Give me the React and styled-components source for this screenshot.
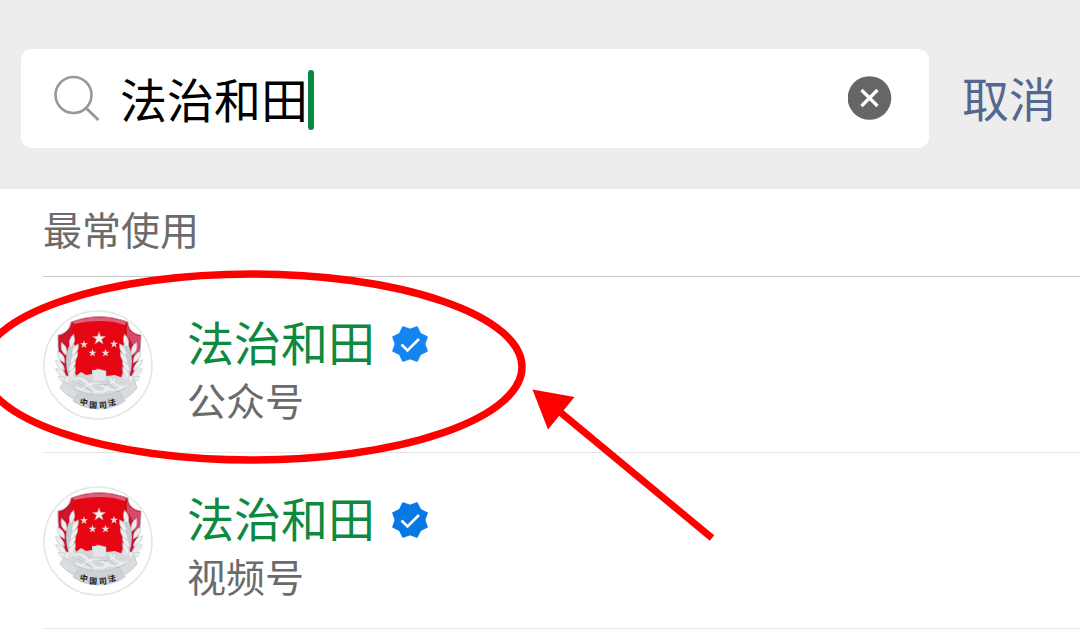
import React, { useState } from "react";
import styled, { createGlobalStyle } from "styled-components";

const GlobalStyle = createGlobalStyle`
  *, *::before, *::after { box-sizing: border-box; }
  body {
    margin: 0;
    background: #fff;
    font-family: "Noto Sans CJK SC", "Noto Sans", sans-serif;
  }
  button, input { font: inherit; margin: 0; padding: 0; border: 0; background: none; }
`;

const Page = styled.main`
  position: relative;
  overflow: hidden;
`;

const Header = styled.header`
  display: flex;
  align-items: center;
  gap: 33px;
  padding: 49px 24px 41px 21px;
  background: #ededed;
`;

const SearchBox = styled.label`
  flex: 1;
  min-width: 0;
  height: 99px;
  display: flex;
  align-items: center;
  padding: 0 37px 2px 33px;
  border-radius: 11px;
  background: #fff;
`;

const SearchIcon = styled.svg`
  width: 46px;
  height: 46px;
  margin-right: 20px;
  flex: none;
`;

const SearchInput = styled.input`
  min-width: 0;
  height: 70px;
  font-size: 47px;
  line-height: 70px;
  color: #000;
  outline: none;
  caret-color: transparent;
`;

const Caret = styled.span`
  width: 6px;
  height: 60px;
  margin-top: 4px;
  border-radius: 3px;
  background: #07893f;
  flex: none;
`;

const ClearButton = styled.button`
  width: 44px;
  height: 44px;
  margin-left: auto;
  flex: none;
  svg { display: block; }
`;

const CancelButton = styled.button`
  padding-bottom: 4px;
  font-size: 47px;
  line-height: 70px;
  color: #54678f;
  white-space: nowrap;
`;

const Results = styled.section`
  padding-left: 43px;
`;

const SectionTitle = styled.h2`
  margin: 0;
  height: 88px;
  border-bottom: 1px solid #cbcbcb;
  font-size: 39px;
  font-weight: 400;
  line-height: 78px;
  color: #6b6b6b;
`;

const ResultList = styled.ul`
  margin: 0;
  padding: 0;
  list-style: none;
`;

const ResultRow = styled.li`
  height: 176px;
  border-bottom: 1px solid #e6e6e6;
`;

const ResultLink = styled.a`
  height: 100%;
  display: flex;
  align-items: center;
  gap: 34px;
  color: inherit;
  text-decoration: none;
`;

const Avatar = styled.svg`
  width: 110px;
  height: 110px;
  flex: none;
`;

const ResultText = styled.div`
  display: flex;
  flex-direction: column;
  padding-top: 9px;
`;

const NameLine = styled.div`
  display: flex;
  align-items: center;
  gap: 17px;
`;

const Name = styled.span`
  font-size: 47px;
  line-height: 60px;
  color: #0d8a40;
`;

const Badge = styled.svg`
  width: 36px;
  height: 36px;
  margin-top: 6px;
`;

const Kind = styled.span`
  font-size: 39px;
  line-height: 56px;
  color: #6b6b6b;
`;

const Markup = styled.svg`
  position: absolute;
  top: 0;
  left: 0;
  pointer-events: none;
`;

function starPoints(cx, cy, r, ratio = 0.4, tips = 5, turn = -90) {
  return Array.from({ length: tips * 2 }, (_, i) => {
    const a = ((turn + (i * 180) / tips) * Math.PI) / 180;
    const d = i % 2 ? r * ratio : r;
    return `${(cx + d * Math.cos(a)).toFixed(2)},${(cy + d * Math.sin(a)).toFixed(2)}`;
  }).join(" ");
}

const leaves = [
  [21, 70, -58], [29, 70, 26], [18, 63, -50], [29, 63, 28], [17, 55, -42],
  [29, 56, 30], [18, 47, -32], [31, 48, 32], [21, 39, -20], [32, 40, 28], [29, 31, 12],
];

function Wheat() {
  return (
    <g>
      <path d="M29 32C23 43 21 60 32 76L36 74C28 60 28 45 31 36Z" fill="#c9cccf" stroke="#c9cccf" strokeWidth="2" />
      {leaves.map(([x, y, turn]) => (
        <path
          key={`${x}-${y}`}
          d={`M${x} ${y - 7}Q${x + 5} ${y} ${x} ${y + 7}Q${x - 5} ${y} ${x} ${y - 7}Z`}
          fill="#eceeef"
          stroke="#bcc0c3"
          strokeWidth="0.5"
          transform={`rotate(${turn} ${x} ${y})`}
        />
      ))}
    </g>
  );
}

const motto = [["中", 40.5, 95, 8], ["国", 50, 98, 3], ["司", 60, 98, -3], ["法", 69.5, 95.5, -12]];

function Emblem() {
  return (
    <Avatar viewBox="0 0 110 110" aria-hidden="true">
      <circle cx="55" cy="55" r="54" fill="#fff" stroke="#e6e6e6" strokeWidth="1.6" />
      <path d="M28 12Q56 1 85 12C85 19 90 24 98 25Q98 50 89 66H23Q14 50 15 25C22 24 27 19 28 12Z" fill="#cb1530" stroke="#b9a4a8" strokeWidth="0.8" />
      <path d="M84 14C85 20 90 25 97 26Q98 40 93 50Q92 34 84 26Z" fill="#d8486a" />
      <path d="M30 12Q56 5 83 12Q83 24 85 32Q86 52 80 68H31Q28 48 29 28Z" fill="#e60512" />
      <path d="M30 12Q56 3 83 12L82 15L71 12Q50 9 31 14Z" fill="#e0607c" />
      <path d="M81 32Q83 49 77 61" fill="none" stroke="#d6153a" strokeWidth="2" />
      <polygon points={starPoints(56, 28.5, 6.8)} fill="#f3eceb" stroke="#c9a5a0" strokeWidth="0.4" />
      {[[41, 34.5], [71, 34], [49.5, 43], [62.5, 43]].map(([x, y]) => (
        <polygon key={x} points={starPoints(x, y, 4.2)} fill="#f0dcda" />
      ))}
      <Wheat />
      <g transform="translate(112 0) scale(-1 1)"><Wheat /></g>
      <path d="M33 66L38 62L43 65L49 64V60L63 61V66L72 65L80 68L87 70L80 84Q56 92 31 84L26 72Z" fill="#d5d8da" />
      <path d="M49.500 61L55 59L63 61V71H49.500Z" fill="#e3e5e6" stroke="#c2c5c8" strokeWidth="0.5" />
      <path d="M31 70Q39 65 46 75T66 80M38 80Q50 69 60 76T80 77M67 68Q73 79 84 76M39 69L54 82M72 69L59 83M33 77Q47 85 61 81" fill="none" stroke="#eceeef" strokeWidth="1.800" />
      <path d="M34 73Q45 77 50 83M64 72L75 82M52 74L68 75M42 67L48 72" fill="none" stroke="#b4b9bd" strokeWidth="0.7" />
      <path d="M21 70Q27 79 38 82L33 90Q23 86 17 78Z" fill="#dadcde" stroke="#babec1" strokeWidth="0.6" />
      <path d="M91 69Q85 78 75 82L80 90Q88 86 94 78Z" fill="#dadcde" stroke="#babec1" strokeWidth="0.6" />
      <path d="M36 81Q56 90 76 81L82 91Q71 99 56 99Q41 99 30 91Z" fill="#cfd2d4" stroke="#babec1" strokeWidth="0.6" />
      {motto.map(([glyph, x, y, turn]) => (
        <text key={glyph} x={x} y={y} fontSize="8" fontWeight="700" fill="#181818" textAnchor="middle" transform={`rotate(${turn} ${x} ${y})`}>{glyph}</text>
      ))}
    </Avatar>
  );
}

function VerifiedBadge({ color }) {
  return (
    <Badge viewBox="0 0 36 36" role="img" aria-label="已认证">
      <polygon points={starPoints(18, 18, 18.4, 0.79, 8, -67.5)} fill={color} stroke={color} strokeWidth="1.6" strokeLinejoin="round" />
      <path d="M9.500 18.500L15.500 24.500L27 13" fill="none" stroke="#fff" strokeWidth="2.6" />
    </Badge>
  );
}

const results = [
  { name: "法治和田", kind: "公众号", badge: "#1485f0" },
  { name: "法治和田", kind: "视频号", badge: "#0878e4" },
];

export default function App() {
  const [query, setQuery] = useState("法治和田");
  return (
    <Page>
      <GlobalStyle />
      <Header>
        <SearchBox>
          <SearchIcon viewBox="0 0 46 46" fill="none" stroke="#999" strokeWidth="2.6" aria-hidden="true">
            <circle cx="19.5" cy="20" r="18" />
            <path d="M32 33L44.500 45" strokeWidth="3" />
          </SearchIcon>
          <SearchInput
            aria-label="搜索"
            value={query}
            onChange={(e) => setQuery(e.target.value)}
            style={{ width: `${query.length}em` }}
          />
          <Caret />
          <ClearButton type="button" aria-label="清除" onClick={() => setQuery("")}>
            <svg width="44" height="44" viewBox="0 0 44 44">
              <circle cx="21.500" cy="22" r="21.800" fill="#666" />
              <path d="M13.500 14L29.500 30M29.500 14L13.500 30" stroke="#fff" strokeWidth="3.2" />
            </svg>
          </ClearButton>
        </SearchBox>
        <CancelButton type="button">取消</CancelButton>
      </Header>
      <Results>
        <SectionTitle>最常使用</SectionTitle>
        <ResultList>
          {results.map((item) => (
            <ResultRow key={item.kind}>
              <ResultLink href="#">
                <Emblem />
                <ResultText>
                  <NameLine>
                    <Name>{item.name}</Name>
                    <VerifiedBadge color={item.badge} />
                  </NameLine>
                  <Kind>{item.kind}</Kind>
                </ResultText>
              </ResultLink>
            </ResultRow>
          ))}
        </ResultList>
      </Results>
      <Markup width="720" height="560" viewBox="0 0 720 560" aria-hidden="true">
        <ellipse cx="252" cy="367" rx="270" ry="93" fill="none" stroke="#fe0000" strokeWidth="7.500" />
        <path d="M560 412L712 538" stroke="#fe0000" strokeWidth="7" />
        <path d="M532.500 389.500L574.500 397L548 429.500Z" fill="#fe0000" />
      </Markup>
    </Page>
  );
}
